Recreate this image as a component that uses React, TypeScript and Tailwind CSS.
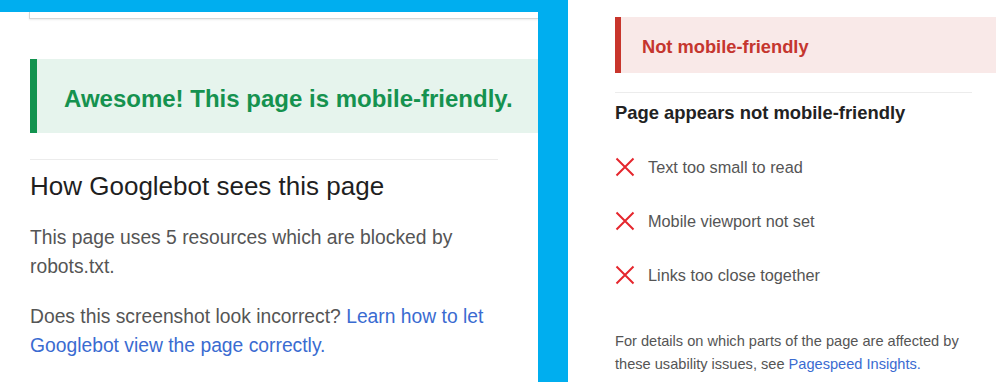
const issues = ["Text too small to read", "Mobile viewport not set", "Links too close together"];

const CrossIcon = () => (
  <svg width="20" height="20" viewBox="0 0 20 20" className="shrink-0">
    <path d="M1.5 1.5 L18.5 18.5 M18.5 1.5 L1.5 18.5" stroke="#e5262d" strokeWidth="2" fill="none" />
  </svg>
);

const App = () => {
  return (
    <div
      className="flex w-[1000px] h-[382px] overflow-hidden bg-[#00aeef]"
      style={{ fontFamily: '"Liberation Sans", Arial, sans-serif' }}
    >
      {/* left: mobile-friendly result */}
      <div className="mt-[12px] w-[538px] shrink-0 bg-white pl-[30px]">
        <div className="ml-[-1px] h-[7px] border-l border-b border-[#d6d6d6] shadow-[0_1px_2px_rgba(0,0,0,0.08)]" />

        <div className="mt-[40px] h-[74px] border-l-[7px] border-[#12934f] bg-[#e6f4ed] pl-[27px] pt-[26px]">
          <p className="text-[24px] leading-[28px] font-bold text-[#15924f] whitespace-nowrap">
            Awesome! This page is mobile-friendly.
          </p>
        </div>

        <div className="mt-[26px] h-px w-[468px] bg-[#ececec]" />

        <h2 className="mt-[11px] text-[26px] leading-[30px] text-[#1f1f1f]">How Googlebot sees this page</h2>

        <p className="mt-[22px] w-[470px] text-[19.3px] leading-[29px] text-[#555]">
          This page uses 5 resources which are blocked by robots.txt.
        </p>
        <div className="mt-[21px] text-[19.3px] leading-[29px] text-[#555]">
          <p>
            Does this screenshot look incorrect? <span className="text-[#3a6bd1]">Learn how to let</span>
          </p>
          <p className="text-[#3a6bd1]">Googlebot view the page correctly.</p>
        </div>
      </div>

      {/* right: not mobile-friendly result */}
      <div className="ml-[30px] flex-1 bg-white pl-[47px] pr-[4px] pt-[17px]">
        <div className="h-[56px] border-l-[6px] border-[#c8352c] bg-[#f9e9e8] pl-[21px] pt-[19px]">
          <p className="text-[18.3px] leading-[22px] font-bold text-[#c5362e]">Not mobile-friendly</p>
        </div>

        <div className="mt-[19px] h-px w-[357px] bg-[#ececec]" />

        <h3 className="mt-[9px] text-[18.4px] leading-[22px] font-bold text-[#222]">
          Page appears not mobile-friendly
        </h3>

        <ul className="mt-[33px] flex flex-col gap-[34px]">
          {issues.map((item) => (
            <li key={item} className="flex h-[20px] items-center gap-[13px] text-[16.3px] text-[#555]">
              <CrossIcon />
              <span>{item}</span>
            </li>
          ))}
        </ul>

        <div className="mt-[45px] text-[14.6px] leading-[23px] text-[#555]">
          <p>For details on which parts of the page are affected by</p>
          <p>
            these usability issues, see <span className="text-[#3a6bd1]">Pagespeed Insights.</span>
          </p>
        </div>
      </div>
    </div>
  );
};

export default App;
